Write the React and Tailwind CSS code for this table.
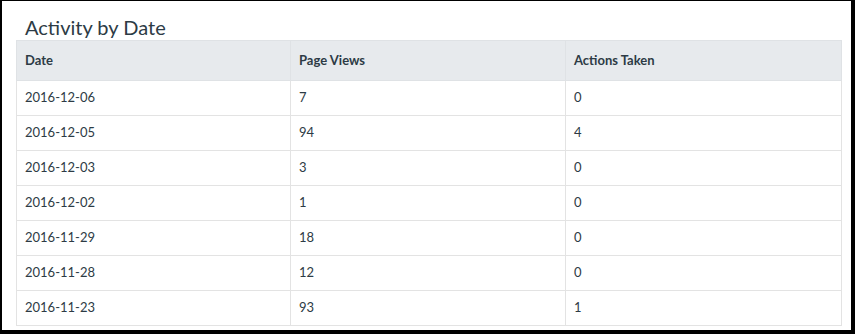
import React from "react";

const rows = [
  ["2016-12-06", "7", "0"],
  ["2016-12-05", "94", "4"],
  ["2016-12-03", "3", "0"],
  ["2016-12-02", "1", "0"],
  ["2016-11-29", "18", "0"],
  ["2016-11-28", "12", "0"],
  ["2016-11-23", "93", "1"],
];

export default function App() {
  return (
    <div
      className="w-[855px] h-[334px] box-border bg-white border-black border-l-2 border-t border-r-4 border-b-4 overflow-hidden text-[#2d3b45]"
      style={{ fontFamily: "Lato, 'Open Sans', sans-serif" }}
    >
      <div className="pl-[14px] pt-[13px]">
        <h2 className="pl-[9px] text-[20px] leading-[26px] font-normal text-[#2d3b45]">
          Activity by Date
        </h2>
        <table className="w-[826px] table-fixed border-collapse text-[13px]">
          <thead>
            <tr className="bg-[#e7eaed] h-[40px]">
              <th className="w-[274px] text-left font-bold px-[8px] border border-[#dfe2e5]">Date</th>
              <th className="w-[275px] text-left font-bold px-[8px] border border-[#dfe2e5]">Page Views</th>
              <th className="text-left font-bold px-[8px] border border-[#dfe2e5]">Actions Taken</th>
            </tr>
          </thead>
          <tbody>
            {rows.map((r) => (
              <tr key={r[0]} className="h-[35px]">
                {r.map((c, i) => (
                  <td key={i} className="px-[8px] border border-[#e3e3e3]">
                    {c}
                  </td>
                ))}
              </tr>
            ))}
          </tbody>
        </table>
      </div>
    </div>
  );
}
